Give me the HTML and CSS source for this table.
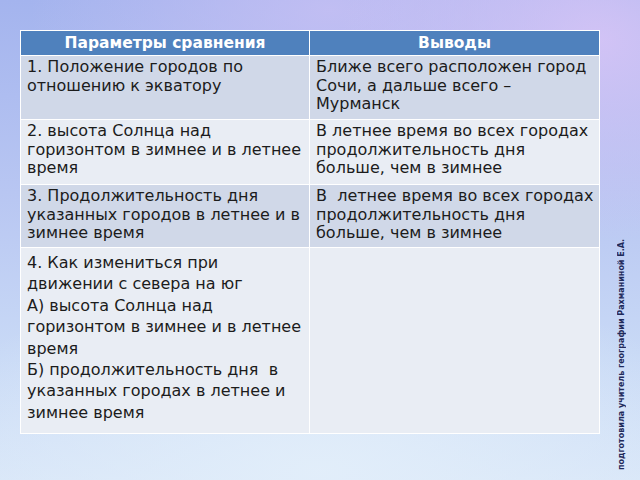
FILE: index.html
```html
<!DOCTYPE html>
<html lang="ru">
<head>
<meta charset="utf-8">
<title>Сравнение</title>
<link rel="stylesheet" href="styles.css">
</head>
<body>
<div class="slide">
  <table class="cmp">
    <thead>
      <tr><th class="c1">Параметры сравнения</th><th class="c2">Выводы</th></tr>
    </thead>
    <tbody>
      <tr class="odd r1">
        <td>1. Положение городов по отношению к экватору</td>
        <td>Ближе всего расположен город Сочи, а дальше всего – Мурманск</td>
      </tr>
      <tr class="even r2">
        <td>2. высота Солнца над горизонтом в зимнее и в летнее время</td>
        <td>В летнее время во всех городах продолжительность дня больше, чем в зимнее</td>
      </tr>
      <tr class="odd r3">
        <td>3. Продолжительность дня указанных городов в летнее и в зимнее время</td>
        <td>В&nbsp; летнее время во всех городах продолжительность дня больше, чем в зимнее</td>
      </tr>
      <tr class="even r4">
        <td class="tall">4. Как измениться при движении с севера на юг<br>А) высота Солнца над горизонтом в зимнее и в летнее время<br>Б) продолжительность дня&nbsp; в указанных городах в летнее и зимнее время</td>
        <td></td>
      </tr>
    </tbody>
  </table>
  <div class="credit">подготовила учитель географии Рахманиной Е.А.</div>
</div>
</body>
</html>
```
FILE: styles.css
```css
html, body {
  margin: 0;
  padding: 0;
}
body {
  width: 640px;
  height: 480px;
  overflow: hidden;
}
.slide {
  position: relative;
  width: 640px;
  height: 480px;
  box-sizing: border-box;
  padding: 30px 40px 0 20px;
  background:
    radial-gradient(ellipse 260px 200px at 600px 40px, rgba(214, 196, 246, 0.9), rgba(214, 196, 246, 0) 100%),
    radial-gradient(ellipse 300px 160px at 330px 10px, rgba(200, 192, 244, 0.8), rgba(200, 192, 244, 0) 100%),
    radial-gradient(ellipse 420px 200px at 320px 470px, rgba(226, 238, 250, 0.95), rgba(226, 238, 250, 0) 100%),
    linear-gradient(180deg, #a4b4ee 0%, #b8c6f2 40%, #c9daf6 75%, #d8e6f8 100%);
  font-family: "DejaVu Sans", sans-serif;
}
.cmp {
  width: 580px;
  border-collapse: collapse;
  table-layout: fixed;
}
.cmp th, .cmp td {
  border: 1px solid #ffffff;
  vertical-align: top;
  text-align: left;
  color: #1c1c1c;
}
.cmp th {
  background: #4f81bd;
  color: #ffffff;
  font-weight: bold;
  font-size: 15.5px;
  text-align: center;
  height: 24px;
  padding: 0;
  vertical-align: middle;
}
.cmp .c1 { width: 288px; }
.cmp td {
  font-size: 16px;
  line-height: 18.5px;
  padding: 2px 4px 4px 6px;
}
.odd td { background: #d0d8e8; }
.even td { background: #e9edf4; }
.r1 td { height: 57px; }
.r2 td { height: 58px; }
.r3 td { height: 56px; }
.r4 td { height: 177px; }
.cmp td.tall {
  line-height: 21.4px;
  padding-top: 4px;
}
.credit {
  position: absolute;
  left: 617px;
  bottom: 10px;
  writing-mode: vertical-rl;
  transform: rotate(180deg);
  font-size: 8px;
  font-weight: bold;
  color: #1f2a5a;
  white-space: nowrap;
}
```
